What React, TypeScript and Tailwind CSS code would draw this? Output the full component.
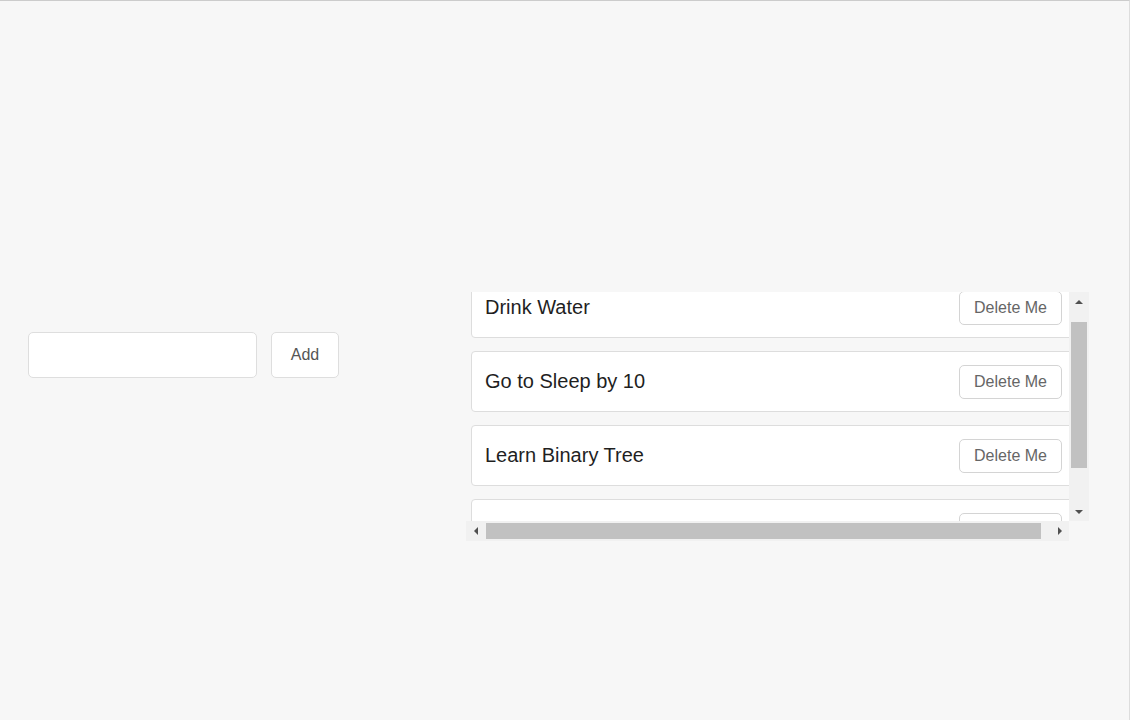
import React from "react";

const todos = ["Drink Water", "Go to Sleep by 10", "Learn Binary Tree", ""];

export default function App() {
  return (
    <div className="w-full h-[720px] bg-[#f7f7f7] border-t border-[#cccccc] border-r border-r-[#dddddd] flex items-start font-['Liberation_Sans',Arial,sans-serif]">
      <div className="ml-[28px] mt-[331px] flex gap-[14px]">
        <input
          type="text"
          className="w-[229px] h-[46px] bg-white border border-[#dedede] rounded-[5px] px-3 text-[16px] outline-none"
        />
        <button className="w-[68px] h-[46px] bg-white border border-[#dedede] rounded-[5px] text-[16px] text-[#555555]">
          Add
        </button>
      </div>

      <div className="ml-[127px] mt-[291px] grid grid-cols-[603px_20px] grid-rows-[229px_20px]">
        <div className="overflow-hidden">
          <div className="-mt-[15px] px-[5px] flex flex-col gap-[13px] w-[615px]">
            {todos.map((t, i) => (
              <div
                key={i}
                className="h-[61px] bg-white border border-[#dddddd] rounded-[4px] flex items-center justify-between pl-[13px] pr-[13px]"
              >
                <span className="text-[20px] leading-[23px] text-[#1f1f1f] -mt-[1px]">{t}</span>
                <button className="h-[34px] w-[103px] bg-white border border-[#d4d4d4] rounded-[5px] text-[16px] text-[#666666]">
                  {t ? "Delete Me" : ""}
                </button>
              </div>
            ))}
          </div>
        </div>

        {/* vertical scrollbar */}
        <div className="bg-[#f1f1f1] flex flex-col items-center">
          <div className="h-[19px] w-full flex items-center justify-center">
            <div className="w-0 h-0 border-x-[4px] border-x-transparent border-b-[4px] border-b-[#505050]" />
          </div>
          <div className="mt-[11px] w-[16px] h-[146px] bg-[#c1c1c1]" />
          <div className="flex-1" />
          <div className="h-[19px] w-full flex items-center justify-center">
            <div className="w-0 h-0 border-x-[4px] border-x-transparent border-t-[4px] border-t-[#505050]" />
          </div>
        </div>

        {/* horizontal scrollbar */}
        <div className="bg-[#f1f1f1] flex items-center">
          <div className="w-[19px] h-full flex items-center justify-center">
            <div className="w-0 h-0 border-y-[4px] border-y-transparent border-r-[4px] border-r-[#505050]" />
          </div>
          <div className="ml-[1px] w-[555px] h-[16px] bg-[#c1c1c1]" />
          <div className="flex-1" />
          <div className="w-[19px] h-full flex items-center justify-center">
            <div className="w-0 h-0 border-y-[4px] border-y-transparent border-l-[4px] border-l-[#505050]" />
          </div>
        </div>
        <div />
      </div>
    </div>
  );
}
